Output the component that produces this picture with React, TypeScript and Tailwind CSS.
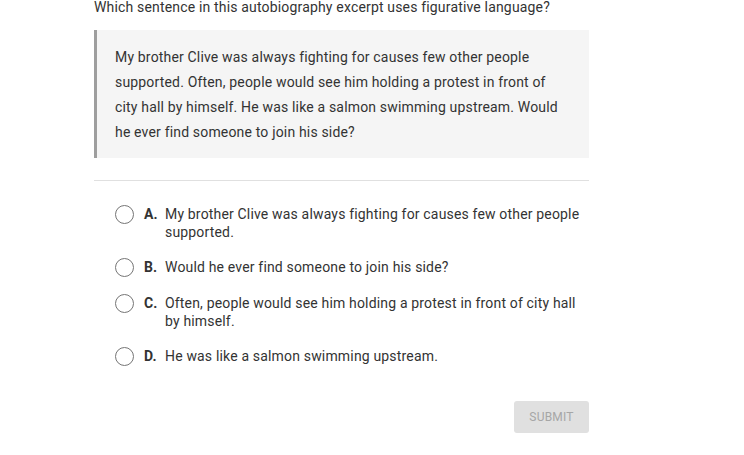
import React, { useState } from 'react';

const options = [
    { key: 'A', text: 'My brother Clive was always fighting for causes few other people supported.' },
    { key: 'B', text: 'Would he ever find someone to join his side?' },
    { key: 'C', text: 'Often, people would see him holding a protest in front of city hall by himself.' },
    { key: 'D', text: 'He was like a salmon swimming upstream.' },
];

const App: React.FC = () => {
    const [selected, setSelected] = useState<string | null>(null);

    return (
        <div className="w-[744px] h-[455px] bg-white text-[#333] font-['Roboto',sans-serif] tracking-[0.17px] overflow-hidden">
            <div className="ml-[94px] w-[495px]">
                <p className="text-[14px] leading-[14px]">Which sentence in this autobiography excerpt uses figurative language?</p>

                <div className="mt-[16px] bg-[#f5f5f5] border-l-[3px] border-[#9e9e9e] pl-[18px] pr-[26px] pt-[15px] pb-[13px]">
                    <p className="text-[14px] leading-[25px]">
                        My brother Clive was always fighting for causes few other people supported. Often, people would see him holding a protest in front of city hall by himself. He was like a salmon swimming upstream. Would he ever find someone to join his side?
                    </p>
                </div>

                <div className="mt-[22px] border-t border-[#e0e0e0]" />

                <div className="mt-[24px] pl-[21px] flex flex-col gap-[17px]">
                    {options.map((o) => (
                        <label key={o.key} className="flex items-start cursor-pointer" onClick={() => setSelected(o.key)}>
                            <span className="w-[19px] h-[19px] shrink-0 rounded-full border-[1.5px] border-[#757575] flex items-center justify-center">
                                {selected === o.key && <span className="w-[9px] h-[9px] rounded-full bg-[#757575]" />}
                            </span>
                            <span className="ml-[10px] w-[21px] shrink-0 text-[14px] leading-[18px] font-bold">{o.key}.</span>
                            <span className="text-[14px] leading-[18px] pr-[6px]">{o.text}</span>
                        </label>
                    ))}
                </div>

                <div className="mt-[35px] flex justify-end">
                    <button className="w-[75px] h-[32px] rounded-[3px] bg-[#e0e0e0] text-[#a6a6a6] text-[12px] tracking-[0.2px]">
                        SUBMIT
                    </button>
                </div>
            </div>
        </div>
    );
};

export default App;
